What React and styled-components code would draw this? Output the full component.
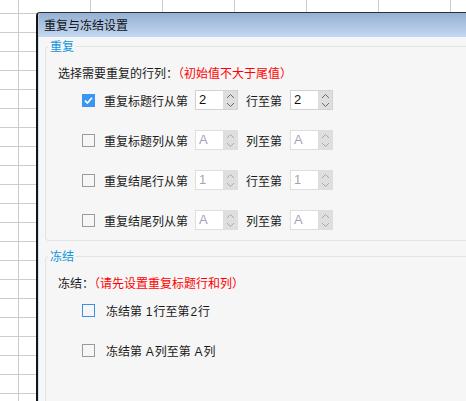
import styled, { createGlobalStyle } from 'styled-components';

const GlobalStyle = createGlobalStyle`
  html, body {
    margin: 0;
    padding: 0;
  }
  body {
    font-family: 'Noto Sans CJK SC', 'Microsoft YaHei', sans-serif;
    font-size: 12px;
    color: #1a1a1a;
  }
`;

const Desktop = styled.div`
  width: 466px;
  height: 401px;
  overflow: hidden;
  box-sizing: border-box;
  padding: 12px 0 0 36px;
  background-color: #fff;
  background-image:
    linear-gradient(to right, #cdcdcd 1px, transparent 1px),
    linear-gradient(to bottom, #cdcdcd 1px, transparent 1px);
  background-size: 72px 100%, 100% 19px;
  background-position: 18px 0, 0 13px;
`;

const Window = styled.div`
  width: 460px;
  height: 420px;
  display: flex;
  flex-direction: column;
  border-top: 1px solid #2e2e2e;
  border-left: 2px solid #141414;
  border-top-left-radius: 4px;
  background: #f6f6f6;
  overflow: hidden;
`;

const TitleBar = styled.div`
  height: 24px;
  line-height: 24px;
  padding-left: 5px;
  background: linear-gradient(to bottom, #95b0d1, #c3d8f2);
  color: #111;
  font-size: 12px;
  border-left: 1px solid #b7cbe4;
`;

const Body = styled.div`
  flex: 1;
  padding: 1px 0 0 6px;
  border-left: 1px solid #cfe0f4;
  display: flex;
  flex-direction: column;
`;

const Group = styled.fieldset`
  margin: 0;
  padding: 0;
  min-width: 0;
  border: 1px solid #e3e3e3;
  border-right: none;
  border-radius: 4px 0 0 4px;

  & + & {
    margin-top: 7px;
    flex: 1;
  }
`;

const Legend = styled.legend`
  margin-left: 2px;
  padding: 0 2px;
  color: #1296db;
  font-size: 12px;
  line-height: 16px;
`;

const GroupBody = styled.div`
  padding: 12px 0 0 12px;
`;

const Intro = styled.div`
  height: 14px;
  line-height: 14px;
  white-space: nowrap;
`;

const Hint = styled.span`
  color: #ff0000;
`;

const Row = styled.div`
  height: 40px;
  display: flex;
  align-items: center;
  padding-left: 24px;
  white-space: nowrap;
`;

const Box = styled.span`
  width: 13px;
  height: 13px;
  box-sizing: border-box;
  display: inline-flex;
  align-items: center;
  justify-content: center;
  border: 1px solid
    ${p => (p.$checked ? '#3a96f0' : p.$focused ? '#3d8ee8' : '#9a9a9a')};
  background: ${p => (p.$checked ? '#3a96f0' : 'transparent')};
`;

const Text = styled.span`
  margin-left: ${p => p.$left || 0}px;
  margin-right: ${p => p.$right || 0}px;
`;

const Num = styled.span`
  font-family: 'Liberation Sans', sans-serif;
  padding: 0 1px;
`;

const Spin = styled.span`
  width: 43px;
  height: 20px;
  box-sizing: border-box;
  display: inline-flex;
  border: 1px solid ${p => (p.$disabled ? '#dedede' : '#d2d2d2')};
  background: #fff;
`;

const SpinField = styled.span`
  flex: 1;
  padding-left: 3px;
  line-height: 18px;
  font-family: 'Liberation Sans', sans-serif;
  font-size: 13px;
  color: ${p => (p.$disabled ? '#a4a4b4' : '#111')};
`;

const SpinButtons = styled.span`
  width: 14px;
  display: flex;
  flex-direction: column;
  align-items: center;
  justify-content: space-around;
  background: #dedede;
  color: ${p => (p.$disabled ? '#a9a9a9' : '#6a6a6a')};
`;

const CheckBox = ({ checked, focused }) => (
  <Box $checked={checked} $focused={focused}>
    {checked && (
      <svg width="11" height="11" viewBox="0 0 11 11">
        <path
          d="M2 5.6 L4.4 8 L9 2.8"
          fill="none"
          stroke="#fff"
          strokeWidth="1.7"
        />
      </svg>
    )}
  </Box>
);

const Chevron = ({ down }) => (
  <svg width="9" height="6" viewBox="0 0 9 6">
    <path
      d={down ? 'M1 1 L4.5 4.5 L8 1' : 'M1 5 L4.5 1.5 L8 5'}
      fill="none"
      stroke="currentColor"
      strokeWidth="1"
    />
  </svg>
);

const Spinner = ({ value, disabled }) => (
  <Spin $disabled={disabled}>
    <SpinField $disabled={disabled}>{value}</SpinField>
    <SpinButtons $disabled={disabled}>
      <Chevron />
      <Chevron down />
    </SpinButtons>
  </Spin>
);

const repeatRows = [
  { label: '重复标题行从第', to: '行至第', from: '2', end: '2', checked: true },
  { label: '重复标题列从第', to: '列至第', from: 'A', end: 'A', disabled: true },
  { label: '重复结尾行从第', to: '行至第', from: '1', end: '1', disabled: true },
  { label: '重复结尾列从第', to: '列至第', from: 'A', end: 'A', disabled: true },
];

const App = () => (
  <>
    <GlobalStyle />
    <Desktop>
      <Window>
        <TitleBar>重复与冻结设置</TitleBar>
        <Body>
          <Group>
            <Legend>重复</Legend>
            <GroupBody>
              <Intro>
                选择需要重复的行列：<Hint>（初始值不大于尾值）</Hint>
              </Intro>
              {repeatRows.map(row => (
                <Row key={row.label}>
                  <CheckBox checked={row.checked} />
                  <Text $left={9} $right={7}>
                    {row.label}
                  </Text>
                  <Spinner value={row.from} disabled={row.disabled} />
                  <Text $left={8} $right={8}>
                    {row.to}
                  </Text>
                  <Spinner value={row.end} disabled={row.disabled} />
                </Row>
              ))}
            </GroupBody>
          </Group>
          <Group>
            <Legend>冻结</Legend>
            <GroupBody>
              <Intro>
                冻结：<Hint>（请先设置重复标题行和列）</Hint>
              </Intro>
              <Row>
                <CheckBox focused />
                <Text $left={11}>
                  冻结第 <Num>1</Num>行至第<Num>2</Num>行
                </Text>
              </Row>
              <Row>
                <CheckBox />
                <Text $left={11}>
                  冻结第 <Num>A</Num>列至第 <Num>A</Num>列
                </Text>
              </Row>
            </GroupBody>
          </Group>
        </Body>
      </Window>
    </Desktop>
  </>
);

export default App;
